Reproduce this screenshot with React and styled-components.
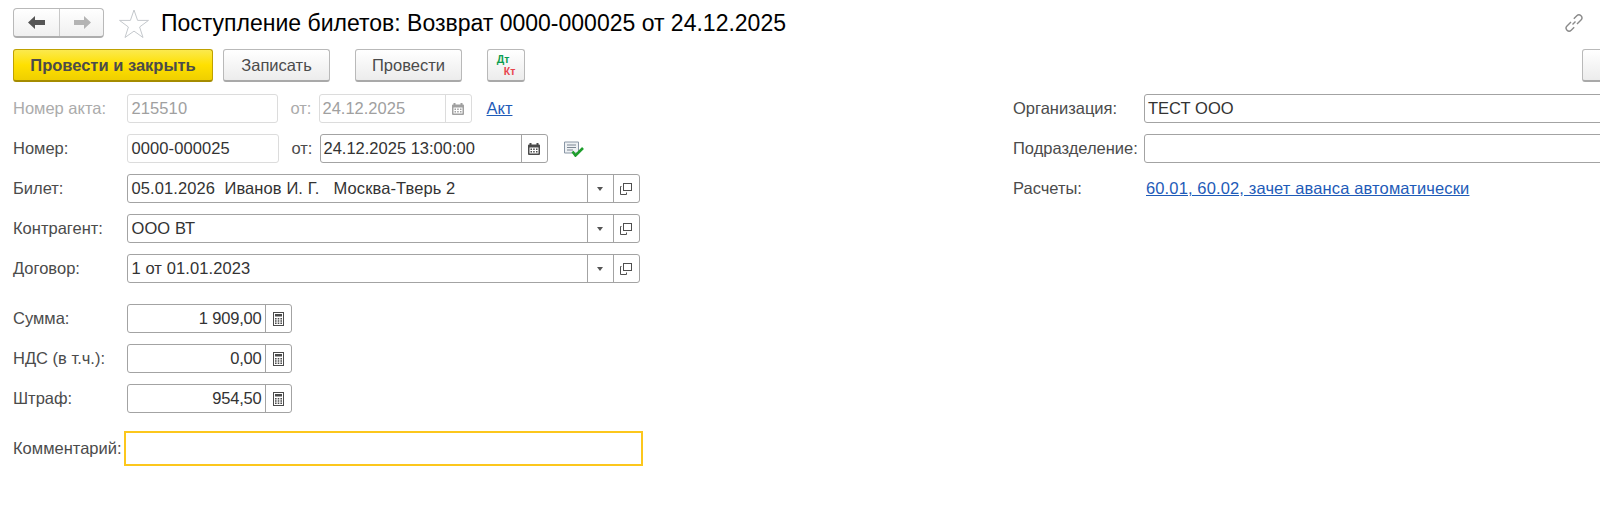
import React from 'react'
import styled, { createGlobalStyle } from 'styled-components'

const GlobalStyle = createGlobalStyle`
  html, body {
    margin: 0;
    padding: 0;
    background: #fff;
    overflow: hidden;
  }
  body {
    font-family: "Liberation Sans", Arial, sans-serif;
    font-size: 16.5px;
    color: #4b4b4b;
  }
`

const Page = styled.div`
  width: 1600px;
  height: 512px;
  padding: 8px 0 0 13px;
  box-sizing: border-box;
  overflow: hidden;
`

const TitleBar = styled.div`
  display: flex;
  align-items: center;
  height: 30px;
`

const NavGroup = styled.div`
  display: flex;
  width: 91px;
  height: 30px;
  box-sizing: border-box;
  border: 1px solid #b9b9b9;
  border-bottom: 2px solid #adadad;
  border-radius: 4px;
  background: linear-gradient(#ffffff, #f0f0f0);
`

const NavButton = styled.div`
  display: flex;
  align-items: center;
  justify-content: center;
  width: 45px;
  flex: none;
  & + & {
    border-left: 1px solid #c8c8c8;
  }
`

const Star = styled.svg`
  width: 30px;
  height: 29px;
  margin-left: 15px;
  flex: none;
`

const Title = styled.h1`
  margin: 0 0 0 12px;
  font-size: 23px;
  font-weight: 400;
  color: #000;
  white-space: nowrap;
`

const LinkIcon = styled.svg`
  width: 20px;
  height: 20px;
  margin-left: auto;
  margin-right: 16px;
  flex: none;
`

const Toolbar = styled.div`
  display: flex;
  height: 33px;
  margin-top: 11px;
`

const Button = styled.div`
  display: flex;
  align-items: center;
  justify-content: center;
  flex: none;
  box-sizing: border-box;
  width: ${p => p.$width}px;
  margin-left: ${p => p.$gap || 0}px;
  border: 1px solid ${p => (p.$primary ? '#bfa100' : '#b9b9b9')};
  border-bottom-width: 2px;
  border-bottom-color: ${p => (p.$primary ? '#a58c00' : '#a9a9a9')};
  border-radius: 3px;
  background: ${p =>
    p.$primary
      ? 'linear-gradient(#fbe94e, #ffe000 50%, #efcf00)'
      : 'linear-gradient(#ffffff, #ececec)'};
  font-weight: ${p => (p.$primary ? 700 : 400)};
  color: #4b4b4b;
`

const EdgeButton = styled(Button)`
  margin-left: auto;
  margin-right: -82px;
  width: 100px;
`

const DebitCredit = styled.div`
  display: flex;
  flex-direction: column;
  font-size: 10.5px;
  font-weight: 700;
  line-height: 12.5px;
`

const Debit = styled.span`
  color: #0b9e50;
`

const Credit = styled.span`
  color: #e8434c;
  margin-left: 7px;
`

const Form = styled.div`
  display: flex;
  margin-top: 12px;
`

const LeftColumn = styled.div`
  width: 1000px;
  flex: none;
`

const RightColumn = styled.div`
  width: 620px;
  flex: none;
`

const Row = styled.div`
  display: flex;
  align-items: center;
  height: ${p => p.$height || 29}px;
  margin-bottom: 11px;
  margin-top: ${p => p.$top || 0}px;
`

const Label = styled.div`
  flex: none;
  width: ${p => p.$width || 113.5}px;
  color: ${p => (p.$muted ? '#ababab' : '#4b4b4b')};
  white-space: nowrap;
`

const InlineLabel = styled.div`
  flex: none;
  margin-left: 13px;
  width: 28px;
  color: ${p => (p.$muted ? '#ababab' : '#4b4b4b')};
`

const Field = styled.div`
  display: flex;
  flex: none;
  width: ${p => p.$width}px;
  height: 29px;
  box-sizing: border-box;
  background: #fff;
  border: 1px solid ${p => (p.$light ? '#dcdcdc' : '#a3a3a3')};
  border-radius: 3px;
`

const Value = styled.div`
  flex: 1;
  min-width: 0;
  padding: 0 ${p => (p.$right ? '3px' : '0')} 0 ${p => p.$pad || 3}px;
  line-height: 27px;
  text-align: ${p => (p.$right ? 'right' : 'left')};
  letter-spacing: ${p => (p.$right ? '-0.2px' : p.$pad ? '0.1px' : '0')};
  color: ${p => (p.$muted ? '#a0a0a0' : '#333')};
  white-space: pre;
`

const FieldButton = styled.div`
  display: flex;
  align-items: center;
  justify-content: center;
  flex: none;
  width: ${p => p.$width || 26}px;
  box-sizing: border-box;
  border-left: 1px solid ${p => (p.$light ? '#dcdcdc' : '#a3a3a3')};
`

const CommentField = styled.div`
  flex: none;
  width: 519px;
  height: 35px;
  box-sizing: border-box;
  border: 2px solid #fcc71c;
`

const ActLink = styled.a`
  margin-left: 15px;
  color: #1e5bb8;
  text-decoration: underline;
`

const PostedIcon = styled.svg`
  width: 20px;
  height: 16px;
  margin-left: 16px;
  flex: none;
`

const AccountsLink = styled.a`
  margin-left: 2px;
  color: #1e5bb8;
  text-decoration: underline;
  white-space: nowrap;
  letter-spacing: 0.13px;
`

const CalendarIcon = ({ color = '#4a4a4a' }) => (
  <svg width="12" height="13" viewBox="0 0 12 13">
    <path d="M1 2.500h10a1 1 0 0 1 1 1V12a1 1 0 0 1-1 1H1a1 1 0 0 1-1-1V3.500a1 1 0 0 1 1-1z" fill={color} />
    <path d="M2.500 1v2.500M9.500 1v2.500" stroke={color} strokeWidth="2" />
    <path d="M1.500 5.500h9v6h-9z" fill="#fff" />
    <path d="M2.500 6.500h1.500v1.500H2.500zM5.200 6.500h1.500v1.500H5.200zM8 6.500h1.500v1.500H8zM2.500 9h1.500v1.500H2.500zM5.200 9h1.500v1.500H5.200zM8 9h1.500v1.500H8z" fill={color} />
  </svg>
)

const CalcIcon = () => (
  <svg width="11" height="14" viewBox="0 0 11 14">
    <rect x="0.5" y="0.5" width="10" height="13" fill="#fff" stroke="#4a4a4a" />
    <rect x="2" y="2" width="7" height="2.500" fill="#4a4a4a" />
    <path d="M2 6h1.600v1.500H2zM4.700 6h1.600v1.500H4.700zM7.400 6H9v1.500H7.400zM2 8.300h1.600v1.500H2zM4.700 8.300h1.600v1.500H4.700zM7.400 8.300H9v1.500H7.400zM2 10.600h1.600v1.500H2zM4.700 10.600h1.600v1.500H4.700zM7.400 10.600H9v1.500H7.400z" fill="#4a4a4a" />
  </svg>
)

const Caret = () => (
  <svg width="6" height="4" viewBox="0 0 6 4">
    <path d="M0 0h6L3 4z" fill="#555" />
  </svg>
)

const CopyIcon = () => (
  <svg width="12" height="12" viewBox="0 0 12 12">
    <rect x="3.500" y="0.500" width="8" height="7" fill="none" stroke="#4f4f4f" />
    <path d="M1.500 3.500H.5v8h6V9.500" fill="none" stroke="#4f4f4f" />
  </svg>
)

const ComboField = ({ children }) => (
  <Field $width={513}>
    <Value $pad={4}>{children}</Value>
    <FieldButton><Caret /></FieldButton>
    <FieldButton><CopyIcon /></FieldButton>
  </Field>
)

const AmountField = ({ children }) => (
  <Field $width={165}>
    <Value $right>{children}</Value>
    <FieldButton><CalcIcon /></FieldButton>
  </Field>
)

export default function App() {
  return (
    <Page>
      <GlobalStyle />
      <TitleBar>
        <NavGroup>
          <NavButton>
            <svg width="17" height="13" viewBox="0 0 17 13">
              <path d="M0 6.500L7 0v4h10v5H7v4z" fill="#555" />
            </svg>
          </NavButton>
          <NavButton>
            <svg width="17" height="13" viewBox="0 0 17 13">
              <path d="M17 6.500L10 0v4H0v5h10v4z" fill="#b4b4b4" />
            </svg>
          </NavButton>
        </NavGroup>
        <Star viewBox="0 0 30 29">
          <path d="M15 1l3.600 10.400H29.500l-8.900 6.600 3.400 10.500L15 22.100l-9 6.400 3.400-10.500L.5 11.400h10.900z" fill="#fff" stroke="#c4c8cc" />
        </Star>
        <Title>Поступление билетов: Возврат 0000-000025 от 24.12.2025</Title>
        <LinkIcon viewBox="0 0 20 20">
          <path d="M8.500 11.500l3-3M7 9l-4 4a3 3 0 0 0 0 4.200 3 3 0 0 0 4.200 0l3-3M13 11l4-4a3 3 0 0 0 0-4.200 3 3 0 0 0-4.200 0l-3 3" fill="none" stroke="#8a8a8a" strokeWidth="1.400" />
        </LinkIcon>
      </TitleBar>
      <Toolbar>
        <Button $primary $width={200}>Провести и закрыть</Button>
        <Button $width={107} $gap={10}>Записать</Button>
        <Button $width={107} $gap={25}>Провести</Button>
        <Button $width={38} $gap={25}>
          <DebitCredit>
            <Debit>Дт</Debit>
            <Credit>Кт</Credit>
          </DebitCredit>
        </Button>
        <EdgeButton />
      </Toolbar>
      <Form>
        <LeftColumn>
          <Row>
            <Label $muted>Номер акта:</Label>
            <Field $width={151} $light><Value $muted $pad={4}>215510</Value></Field>
            <InlineLabel $muted>от:</InlineLabel>
            <Field $width={153} $light>
              <Value $muted>24.12.2025</Value>
              <FieldButton $light><CalendarIcon color="#a0a0a0" /></FieldButton>
            </Field>
            <ActLink>Акт</ActLink>
          </Row>
          <Row>
            <Label>Номер:</Label>
            <Field $width={152} $light><Value $pad={4}>0000-000025</Value></Field>
            <InlineLabel>от:</InlineLabel>
            <Field $width={228}>
              <Value>24.12.2025 13:00:00</Value>
              <FieldButton><CalendarIcon /></FieldButton>
            </Field>
            <PostedIcon viewBox="0 0 20 16">
              <path d="M.5 1h14v11H.5z" fill="#eef1f4" stroke="#8a97a6" />
              <path d="M3 4h9M3 6.500h9M3 9h6" stroke="#7c8794" />
              <path d="M8.500 10.500l3 4 7.500-7.500" fill="none" stroke="#1e9e2c" strokeWidth="2.600" />
            </PostedIcon>
          </Row>
          <Row>
            <Label>Билет:</Label>
            <ComboField>05.01.2026  Иванов И. Г.   Москва-Тверь 2</ComboField>
          </Row>
          <Row>
            <Label>Контрагент:</Label>
            <ComboField>ООО ВТ</ComboField>
          </Row>
          <Row>
            <Label>Договор:</Label>
            <ComboField>1 от 01.01.2023</ComboField>
          </Row>
          <Row $top={21}>
            <Label>Сумма:</Label>
            <AmountField>1 909,00</AmountField>
          </Row>
          <Row>
            <Label>НДС (в т.ч.):</Label>
            <AmountField>0,00</AmountField>
          </Row>
          <Row>
            <Label>Штраф:</Label>
            <AmountField>954,50</AmountField>
          </Row>
          <Row $height={35} $top={18}>
            <Label $width={111}>Комментарий:</Label>
            <CommentField />
          </Row>
        </LeftColumn>
        <RightColumn>
          <Row>
            <Label $width={131}>Организация:</Label>
            <Field $width={480}><Value>ТЕСТ ООО</Value></Field>
          </Row>
          <Row>
            <Label $width={131}>Подразделение:</Label>
            <Field $width={480}><Value /></Field>
          </Row>
          <Row>
            <Label $width={131}>Расчеты:</Label>
            <AccountsLink>60.01, 60.02, зачет аванса автоматически</AccountsLink>
          </Row>
        </RightColumn>
      </Form>
    </Page>
  )
}
